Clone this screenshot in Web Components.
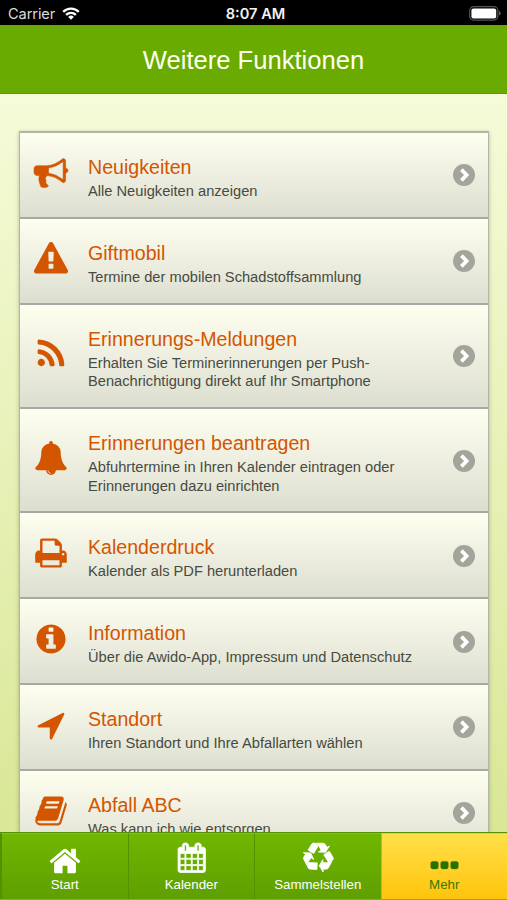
<!DOCTYPE html>
<html lang="de">
<head>
<meta charset="utf-8">
<title>Weitere Funktionen</title>
<style>
html, body {
    margin: 0;
    height: 100%;
    overflow: hidden;
}
body {
    font-family: "Liberation Sans", Arial, sans-serif;
}
</style>
</head>
<body>
<app-screen>
    <status-bar slot="top" carrier="Carrier" time="8:07 AM"></status-bar>
    <title-bar slot="top">Weitere Funktionen</title-bar>
    <function-item icon="bullhorn" label="Neuigkeiten">Alle Neuigkeiten anzeigen</function-item>
    <function-item icon="warning" label="Giftmobil">Termine der mobilen Schadstoffsammlung</function-item>
    <function-item icon="rss" label="Erinnerungs-Meldungen">Erhalten Sie Terminerinnerungen per Push-<br>Benachrichtigung direkt auf Ihr Smartphone</function-item>
    <function-item icon="bell" label="Erinnerungen beantragen">Abfuhrtermine in Ihren Kalender eintragen oder<br>Erinnerungen dazu einrichten</function-item>
    <function-item icon="print" label="Kalenderdruck">Kalender als PDF herunterladen</function-item>
    <function-item icon="info" label="Information">Über die Awido-App, Impressum und Datenschutz</function-item>
    <function-item icon="arrow" label="Standort">Ihren Standort und Ihre Abfallarten wählen</function-item>
    <function-item icon="book" label="Abfall ABC">Was kann ich wie entsorgen</function-item>
    <tab-item slot="tabs" icon="home">Start</tab-item>
    <tab-item slot="tabs" icon="calendar">Kalender</tab-item>
    <tab-item slot="tabs" icon="recycle">Sammelstellen</tab-item>
    <tab-item slot="tabs" icon="more" active>Mehr</tab-item>
</app-screen>

<script>
// all icons share a 1792 unit grid
const ICONS = {
    bullhorn: "M1664 640q53 0 90.5 37.5t37.5 90.5-37.5 90.5-90.5 37.5v384q0 52-38 90t-90 38q-417-347-812-380-58 19-91 66t-31 100.5 40 92.5q-20 33-23 65.5t6 58 33.5 55 48 50 61.5 50.5q-29 58-111.5 83t-168.5 11.5-132-55.5q-7-23-29.5-87.5t-32-94.5-23-89-15-101 3.5-98 22-110.5h-122q-66 0-113-47t-47-113v-192q0-66 47-113t113-47h480q435 0 896-384 52 0 90 38t38 90v384zm-128 604v-954q-394 302-768 343v270q377 42 768 341z",
    warning: "M1024 1375v-190q0-14-9.5-23.5t-22.5-9.5h-192q-13 0-22.5 9.5t-9.5 23.5v190q0 14 9.5 23.5t22.5 9.5h192q13 0 22.5-9.5t9.5-23.5zm-2-374l18-459q0-12-10-19-13-11-24-11h-220q-11 0-24 11-10 7-10 21l17 457q0 10 10 16.5t24 6.5h185q14 0 23.5-6.5t10.5-16.5zm-14-934l768 1408q35 63-2 126-17 29-46.5 46t-63.5 17h-1536q-34 0-63.5-17t-46.5-46q-37-63-2-126l768-1408q17-31 47-49t65-18 65 18 47 49z",
    rss: "M576 1344q0 80-56 136t-136 56-136-56-56-136 56-136 136-56 136 56 56 136zm512 123q2 28-17 48-18 21-47 21h-135q-25 0-43-16.5t-20-41.5q-22-229-184.5-391.5t-391.5-184.5q-25-2-41.5-20t-16.5-43v-135q0-29 21-47 17-17 43-17h5q160 13 306 80.5t259 181.5q114 113 181.5 259t80.5 306zm512 2q2 27-18 47-18 20-46 20h-143q-26 0-44.5-17.5t-19.5-42.5q-12-215-101-408.5t-231.5-336-336-231.5-408.5-102q-25-1-42.5-19.5t-17.5-43.5v-143q0-28 20-46 18-18 44-18h3q262 13 501.5 120t425.5 294q187 186 294 425.5t120 501.5z",
    bell: "M912 1696q0-16-16-16-59 0-101.5-42.5t-42.5-101.5q0-16-16-16t-16 16q0 73 51.5 124.5t124.5 51.5q16 0 16-16zm816-288q0 52-38 90t-90 38h-448q0 106-75 181t-181 75-181-75-75-181h-448q-52 0-90-38t-38-90q50-42 91-88t85-119.5 74.5-158.5 50-206 19.5-260q0-152 117-282.5t307-158.5q-8-19-8-39 0-40 28-68t68-28 68 28 28 68q0 20-8 39 190 28 307 158.5t117 282.5q0 139 19.5 260t50 206 74.5 158.5 85 119.5 91 88z",
    print: "M448 1536h896v-256h-896v256zm0-640h896v-384h-160q-40 0-68-28t-28-68v-160h-640v640zm1152 64q0-26-19-45t-45-19-45 19-19 45 19 45 45 19 45-19 19-45zm128 0v416q0 13-9.5 22.5t-22.5 9.5h-224v160q0 40-28 68t-68 28h-960q-40 0-68-28t-28-68v-160h-224q-13 0-22.5-9.5t-9.5-22.5v-416q0-79 56.5-135.5t135.5-56.5h64v-544q0-40 28-68t68-28h672q40 0 88 20t76 48l152 152q28 28 48 76t20 88v256h64q79 0 135.5 56.5t56.5 135.5z",
    info: "M1152 1376v-160q0-14-9-23t-23-9h-96v-512q0-14-9-23t-23-9h-320q-14 0-23 9t-9 23v160q0 14 9 23t23 9h96v320h-96q-14 0-23 9t-9 23v160q0 14 9 23t23 9h448q14 0 23-9t9-23zm-128-896v-160q0-14-9-23t-23-9h-192q-14 0-23 9t-9 23v160q0 14 9 23t23 9h192q14 0 23-9t9-23zm640 416q0 209-103 385.5t-279.5 279.5-385.5 103-385.5-103-279.5-279.5-103-385.5 103-385.5 279.5-279.5 385.5-103 385.5 103 279.5 279.5 103 385.5z",
    arrow: "M1593 349l-640 1280q-17 35-57 35-5 0-15-2-22-5-35.5-22.5t-13.5-39.5v-576h-576q-22 0-39.5-13.5t-22.5-35.5 4-42 29-30l1280-640q13-7 29-7 27 0 45 19 15 14 18.5 34.5t-6.5 39.5z",
    book: "M1703 478q40 57 18 129l-275 906q-19 64-76.5 107.5t-122.5 43.5h-923q-77 0-148.5-53.5t-99.5-131.5q-24-67-2-127 0-4 3-27t4-37q1-8-3-21.5t-3-19.5q2-11 8-21t16.5-23.5 16.5-23.5q23-38 45-91.5t30-91.5q3-10 .5-30t-.5-28q3-11 17-28t17-23q21-36 42-92t25-90q1-9-2.5-32t.5-28q4-13 22-30.5t22-22.5q19-26 42.5-84.5t27.5-96.5q1-8-3-25.5t-2-26.5q2-8 9-18t18-23 17-21q8-12 16.5-30.5t15-35 16-36 19.5-32 26.5-23.5 36-11.5 47.5 5.5l-1 3q38-9 51-9h761q74 0 114 56t18 130l-274 906q-36 119-71.5 153.5t-128.5 34.5h-869q-27 0-38 15-11 16-1 43 24 70 144 70h923q29 0 56-15.5t35-41.5l300-987q7-22 5-57 38 15 59 43zm-1064 2q-4 13 2 22.5t20 9.5h608q13 0 25.5-9.5t16.5-22.5l21-64q4-13-2-22.5t-20-9.5h-608q-13 0-25.5 9.5t-16.5 22.5zm-83 256q-4 13 2 22.5t20 9.5h608q13 0 25.5-9.5t16.5-22.5l21-64q4-13-2-22.5t-20-9.5h-608q-13 0-25.5 9.5t-16.5 22.5z",
    home: "M1472 992v480q0 26-19 45t-45 19h-384v-384h-256v384h-384q-26 0-45-19t-19-45v-480q0-1 .5-3t.5-3l575-474 575 474q1 2 1 6zm223-69l-62 74q-8 9-21 11h-3q-13 0-21-7l-692-577-692 577q-12 8-24 7-13-2-21-11l-62-74q-8-10-7-23.5t11-21.5l719-599q32-26 76-26t76 26l244 204v-195q0-14 9-23t23-9h192q14 0 23 9t9 23v408l219 182q10 8 11 21.5t-7 23.5z",
    calendar: "M192 1664h288v-288h-288v288zm352 0h320v-288h-320v288zm-352-352h288v-320h-288v320zm352 0h320v-320h-320v320zm-352-384h288v-288h-288v288zm736 736h320v-288h-320v288zm-384-736h320v-288h-320v288zm768 736h288v-288h-288v288zm-384-352h320v-320h-320v320zm-352-864v-288q0-13-9.5-22.5t-22.5-9.5h-64q-13 0-22.5 9.5t-9.5 22.5v288q0 13 9.5 22.5t22.5 9.5h64q13 0 22.5-9.5t9.5-22.5zm736 864h288v-320h-288v320zm-384-384h320v-288h-320v288zm384 0h288v-288h-288v288zm32-480v-288q0-13-9.5-22.5t-22.5-9.5h-64q-13 0-22.5 9.5t-9.5 22.5v288q0 13 9.5 22.5t22.5 9.5h64q13 0 22.5-9.5t9.5-22.5zm384-64v1280q0 52-38 90t-90 38h-1408q-52 0-90-38t-38-90v-1280q0-52 38-90t90-38h128v-96q0-66 47-113t113-47h64q66 0 113 47t47 113v96h384v-96q0-66 47-113t113-47h64q66 0 113 47t47 113v96h128q52 0 90 38t38 90z",
    recycle: "M836 1169l-15 368-2 22-420-29q-36-3-67-31.5t-47-65.5q-11-27-14.5-55t4-65 12-55 21.5-64 19-53q78 12 509 28zm-387-586l180 379-147-92q-63 72-111.5 144.5t-72.5 125-39.5 94.5-18.5 63l-4 21-190-357q-17-26-18-56t6-47l8-18q35-63 114-188l-140-86zm1231 517l-188 359q-12 29-36.5 46.5t-43.5 20.5l-18 4q-71 7-219 12l8 164-230-367 211-362 7 173q170 16 283 5t170-33zm-785-924q-47 63-265 435l-317-187-19-12 225-356q20-31 60-45t80-10q24 2 48.5 12t42 21 41.5 33 36 34.5 36 39.5 32 35zm655 307l212 363q18 37 12.5 76t-27.5 74q-13 20-33 37t-38 28-48.5 22-47 16-51.5 14-46 12q-34-72-265-436l313-195zm-143-226l142-83-220 373-419-20 151-86q-34-89-75-166t-75.5-123.5-64.5-80-47-46.5l-17-13 405 1q31-3 58 10.5t39 28.5l11 15q39 61 112 190z",
    more: "M576 1088v192q0 40-28 68t-68 28h-192q-40 0-68-28t-28-68v-192q0-40 28-68t68-28h192q40 0 68 28t28 68zm512 0v192q0 40-28 68t-68 28h-192q-40 0-68-28t-28-68v-192q0-40 28-68t68-28h192q40 0 68 28t28 68zm512 0v192q0 40-28 68t-68 28h-192q-40 0-68-28t-28-68v-192q0-40 28-68t68-28h192q40 0 68 28t28 68z"
};

// extra outline for the icons whose thin parts get lost at small sizes
const ICON_WEIGHTS = { bullhorn: 30, calendar: 45, recycle: 50, more: 20 };

class AppIcon extends HTMLElement {
    connectedCallback() {
        const name = this.getAttribute("name");
        const shadow = this.shadowRoot || this.attachShadow({ mode: "open" });
        shadow.innerHTML = /*html*/`
        <style>
        :host { display: block; width: 34px; height: 34px; }
        svg {
            display: block;
            width: 100%;
            height: 100%;
            fill: currentColor;
            stroke: currentColor;
            stroke-width: ${ICON_WEIGHTS[name] || 0};
            overflow: visible;
        }
        </style>
        <svg viewBox="0 0 1792 1792"><path d="${ICONS[name]}"/></svg>`;
    }
}
window.customElements.define("app-icon", AppIcon);

class StatusBar extends HTMLElement {
    constructor() {
        super();
        this.attachShadow({ mode: "open" });
    }

    connectedCallback() {
        this.shadowRoot.innerHTML = /*html*/`
        <style>
        :host {
            display: grid;
            grid-template-columns: 1fr auto 1fr;
            align-items: center;
            box-sizing: border-box;
            height: 25px;
            padding: 2px 6px 0 8px;
            background: #000;
            color: #dcdcdc;
            font: 14.600px/20px Inter, "Liberation Sans", sans-serif;
        }
        .left { display: flex; align-items: center; gap: 7px; }
        .carrier { letter-spacing: -0.1px; padding-top: 1px; }
        .time { font-weight: 600; font-size: 14.600px; color: #f2f2f2; padding: 1px 0 0 2px; }
        svg { display: block; }
        .battery { justify-self: end; }
        </style>
        <div class="left">
            <span class="carrier">${this.getAttribute("carrier")}</span>
            <svg width="18" height="13" viewBox="0 0 18 13" fill="none" stroke="#fff" stroke-width="2.3">
                <path d="M1.2 4.9a11 11 0 0 1 15.6 0M4.1 7.9a6.9 6.9 0 0 1 9.8 0"/>
                <path d="M9 12.8L6.2 9.9a4 4 0 0 1 5.6 0z" fill="#fff" stroke="none"/>
            </svg>
        </div>
        <span class="time">${this.getAttribute("time")}</span>
        <svg class="battery" width="32" height="15" viewBox="0 0 32 15">
            <rect x=".7" y=".7" width="28.2" height="13.4" rx="4" fill="none" stroke="#55555a" stroke-width="1.2"/>
            <rect x="2.4" y="2.4" width="24.8" height="10" rx="2" fill="#fff"/>
            <path d="M30 5v4.600q1.500-.6 1.500-2.300t-1.500-2.300z" fill="#66666a"/>
        </svg>`;
    }
}
window.customElements.define("status-bar", StatusBar);

class TitleBar extends HTMLElement {
    constructor() {
        super();
        this.attachShadow({ mode: "open" }).innerHTML = /*html*/`
        <style>
        :host {
            display: flex;
            align-items: center;
            justify-content: center;
            box-sizing: border-box;
            height: 69px;
            padding-top: 3px;
            border-bottom: 1px solid #5d9310;
            background: #69ab00;
            color: #fffff0;
            font-size: 25.600px;
        }
        </style>
        <slot></slot>`;
    }
}
window.customElements.define("title-bar", TitleBar);

class FunctionItem extends HTMLElement {
    constructor() {
        super();
        this.attachShadow({ mode: "open" });
    }

    connectedCallback() {
        this.shadowRoot.innerHTML = /*html*/`
        <style>
        :host {
            display: flex;
            align-items: center;
            box-sizing: border-box;
            padding: 21px 13px 16.500px 14px;
            border-bottom: 2px solid #a8a8a5;
            background: linear-gradient(#fffff0, #dcdecf);
        }
        app-icon { color: #d45500; margin-top: -9px; }
        .text { flex: 1; padding-left: 20px; min-width: 0; }
        .label { color: #d45500; font-size: 19.600px; line-height: 26px; padding-bottom: 2px; white-space: nowrap; }
        .info { color: #484a42; font-size: 14.660px; line-height: 18.400px; white-space: nowrap; }
        .chevron { display: block; width: 22px; height: 22px; margin-top: -4px; }
        </style>
        <app-icon name="${this.getAttribute("icon")}"></app-icon>
        <div class="text">
            <div class="label">${this.getAttribute("label")}</div>
            <div class="info"><slot></slot></div>
        </div>
        <svg class="chevron" viewBox="0 0 22 22">
            <circle cx="11" cy="11" r="11" fill="#a4a59a"/>
            <path d="M8.400 5.600l5.200 5.400-5.200 5.400" fill="none" stroke="#fff" stroke-width="3.700"/>
        </svg>`;
    }
}
window.customElements.define("function-item", FunctionItem);

class TabItem extends HTMLElement {
    constructor() {
        super();
        this.attachShadow({ mode: "open" });
    }

    connectedCallback() {
        this.shadowRoot.innerHTML = /*html*/`
        <style>
        :host {
            display: flex;
            flex-direction: column;
            align-items: center;
            flex: 1;
            box-sizing: border-box;
            padding-top: 8px;
            border-left: 1px solid #549000;
            border-top: 1px solid #84c020;
            background: linear-gradient(#70b700, #5f9f00);
            color: #fff;
            font-size: 13.300px;
            line-height: 17px;
        }
        :host([active]) {
            border-left-color: #e0b000;
            border-top-color: #f5cc30;
            background: linear-gradient(#ffe04a, #ffc40c);
            color: #337a00;
        }
        .icon {
            display: flex;
            align-items: center;
            justify-content: center;
            height: 32px;
            margin-bottom: 2px;
        }
        app-icon { width: 30.500px; height: 30.500px; }
        :host([icon="home"]) app-icon { width: 34px; height: 34px; margin-top: 6px; }
        :host([icon="calendar"]) app-icon { width: 29.500px; height: 29.500px; }
        :host([active]) app-icon { width: 35px; height: 35px; margin-top: 3px; color: #2a7000; }
        </style>
        <div class="icon"><app-icon name="${this.getAttribute("icon")}"></app-icon></div>
        <slot></slot>`;
    }
}
window.customElements.define("tab-item", TabItem);

class AppScreen extends HTMLElement {
    constructor() {
        super();
        this.attachShadow({ mode: "open" }).innerHTML = /*html*/`
        <style>
        :host {
            display: flex;
            flex-direction: column;
            height: 100vh;
            background: linear-gradient(#f5fbd8 94px, #d9e796 832px);
        }
        main { flex: 1; min-height: 0; overflow: hidden; padding: 37px 18px 0 19px; }
        .list {
            border: 1px solid #b3b5a6;
            border-width: 2px 1px 0 1px;
            box-shadow: 0 1px 4px rgba(0, 0, 0, .25);
        }
        nav {
            display: flex;
            height: 68px;
            box-sizing: border-box;
            padding-left: 1px;
            border-top: 1px solid #568f08;
            border-bottom: 1px solid #86b800;
            background: #549000;
        }
        </style>
        <slot name="top"></slot>
        <main><div class="list"><slot></slot></div></main>
        <nav><slot name="tabs"></slot></nav>`;
    }
}
window.customElements.define("app-screen", AppScreen);
</script>
</body>
</html>
